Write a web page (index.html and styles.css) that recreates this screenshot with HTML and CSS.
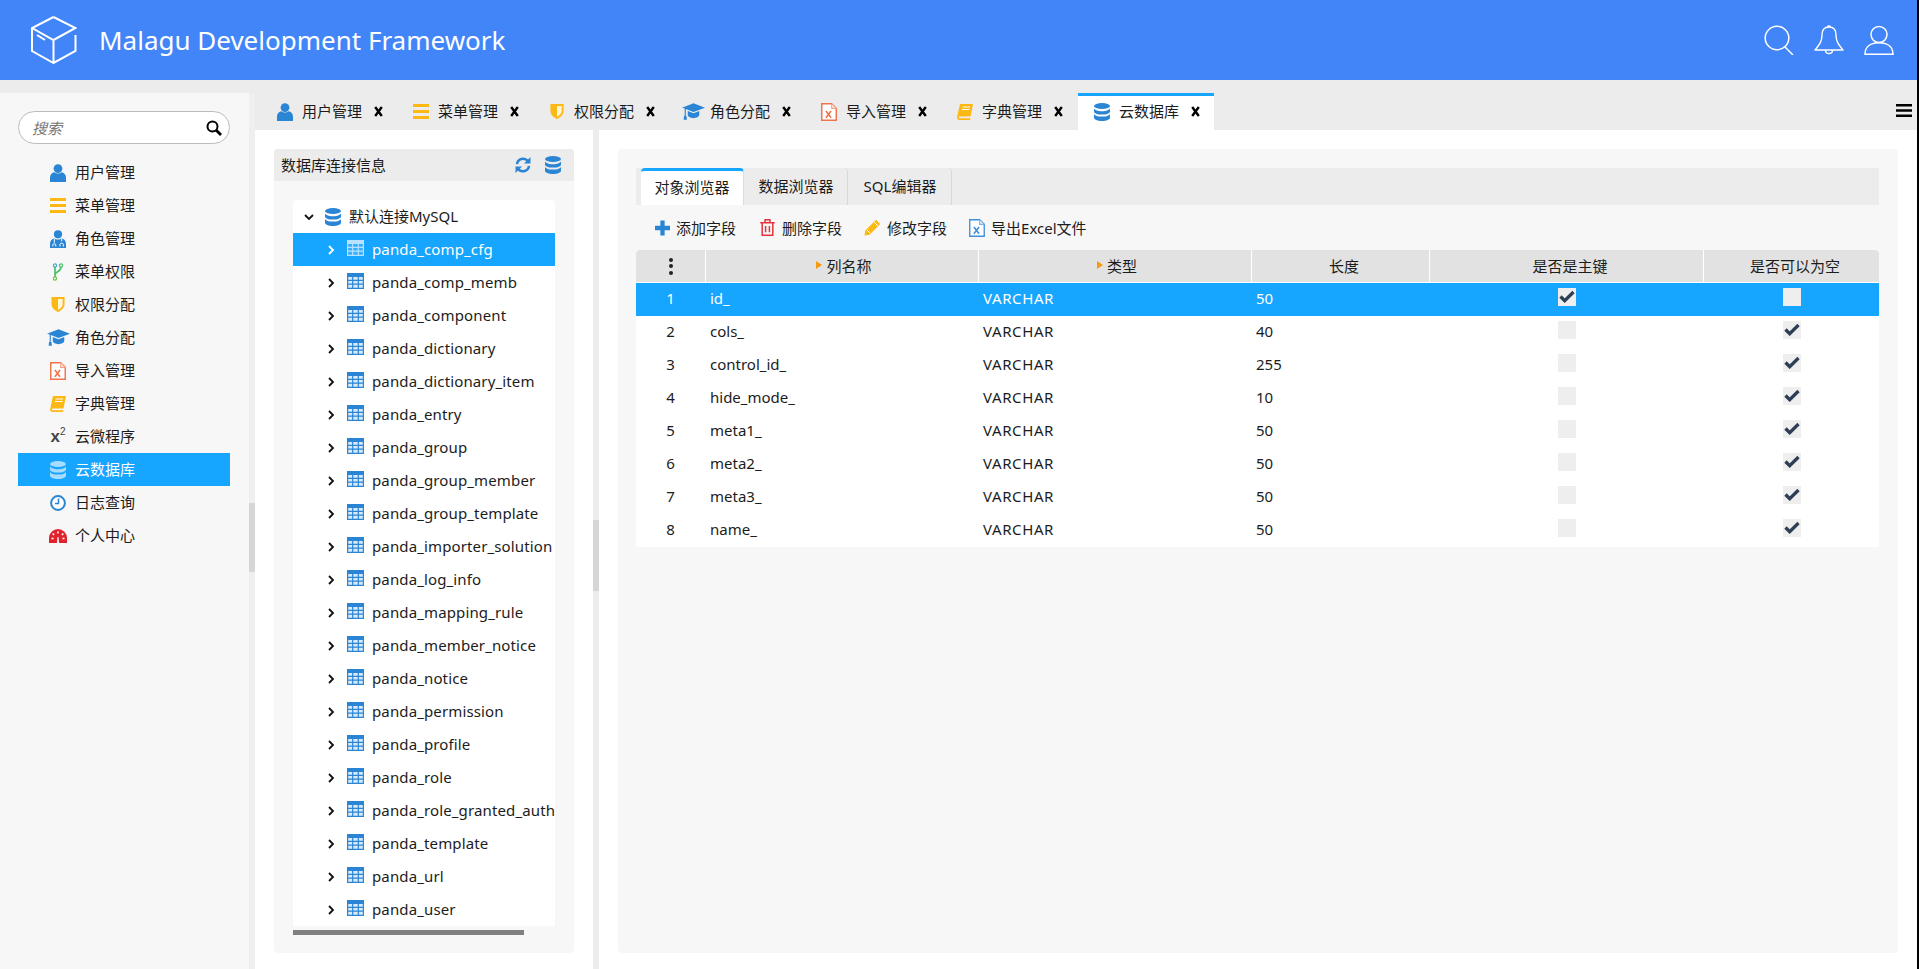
FILE: index.html
```html
<!DOCTYPE html>
<html lang="zh-CN">
<head>
<meta charset="utf-8">
<title>Malagu Development Framework</title>
<link rel="stylesheet" href="styles.css">
</head>
<body>
<svg class="defs" xmlns="http://www.w3.org/2000/svg">
  <symbol id="i-user" viewBox="0 0 16 18"><circle cx="8" cy="4.600" r="4.400" fill="currentColor"/><path d="M0 18v-4.500C0 10.500 2 8.600 4.400 8.200 5.400 9 6.600 9.400 8 9.400s2.600-.4 3.600-1.200C14 8.600 16 10.500 16 13.500V18z" fill="currentColor"/></symbol>
  <symbol id="i-bars" viewBox="0 0 16 15"><path d="M0 0h16v3H0zM0 6h16v3H0zM0 12h16v3H0z" fill="#fdb813"/></symbol>
  <symbol id="i-doctor" viewBox="0 0 16 18"><circle cx="8" cy="4.300" r="4.100" fill="#2a85d5"/><path d="M0 18v-4.200C0 10.500 2 8.800 4.400 8.400c1 .8 2.200 1.100 3.600 1.100s2.600-.3 3.600-1.100C14 8.800 16 10.500 16 13.800V18z" fill="#2a85d5"/><path d="M4.300 9v3.800M11.700 9v2.300M2.800 16.500v-1.600c0-1.500 3-1.500 3 0v1.600M10 16.500v-2.200c0-1.400 3.400-1.400 3.400 0v2.200" fill="none" stroke="#fff" stroke-width="1"/></symbol>
  <symbol id="i-branch" viewBox="0 0 12 18"><path d="M3 4v10M3 12c0-4 6-2.500 6-8" fill="none" stroke="#4cc06a" stroke-width="1.700"/><circle cx="3" cy="2.500" r="1.600" fill="none" stroke="#4aa8c8" stroke-width="1.200"/><circle cx="9" cy="2.500" r="1.600" fill="none" stroke="#4cc06a" stroke-width="1.200"/><circle cx="3" cy="15.500" r="1.600" fill="none" stroke="#6cc04a" stroke-width="1.200"/></symbol>
  <symbol id="i-shield" viewBox="0 0 14 16"><path d="M0 0h14v7.500C14 12 10 14.500 7 16 4 14.500 0 12 0 7.500z" fill="#fdb813"/><path d="M7 2h5v5.500c0 3-2.600 5-5 6.200z" fill="#fff5d8"/></symbol>
  <symbol id="i-cap" viewBox="0 0 24 17"><path d="M12 0 24 4.500 12 9 4 6v7H2.800V5.400L0 4.500z" fill="#2a85d5"/><path d="M6 8v4c0 2 3 3.500 6 3.500s6-1.500 6-3.500V8l-6 2.300z" fill="#2a85d5"/><path d="M2.200 13h2.400l.5 4H1.700z" fill="#2a85d5"/></symbol>
  <symbol id="i-excel" viewBox="0.300 0.300 15.400 17.400"><path d="M1 1h9.500L15 5.500V17H1z" fill="#fff" stroke="#f0734a" stroke-width="1.400"/><path d="M10.500 1v4.500H15" fill="#fde3da" stroke="#f0a58e" stroke-width="1"/><path d="M5 8l5 6.500M10 8l-5 6.500" stroke="#f0734a" stroke-width="1.500"/></symbol>
  <symbol id="i-excel-blue" viewBox="0.300 0.300 15.400 17.400"><path d="M1 1h9.500L15 5.500V17H1z" fill="#fff" stroke="#3f8fdc" stroke-width="1.300"/><path d="M10.500 1v4.500H15" fill="#dcecfa" stroke="#7fb4e6" stroke-width="1"/><path d="M5 8l5 6.500M10 8l-5 6.500" stroke="#3f8fdc" stroke-width="1.500"/></symbol>
  <symbol id="i-book" viewBox="0 0 16 16"><path d="M3 0h13l-2.500 12.500H2.800c-1.200 0-1.500 1.800 0 1.800h10.700L13 16H2.500C.800 16-.2 14.500.1 13z" fill="#fdb813"/><path d="M5.500 3H13M5 5.500h7.500" stroke="#fff" stroke-width="1.100"/></symbol>
  <symbol id="i-db" viewBox="0 0 16 18"><ellipse cx="8" cy="3" rx="8" ry="3" fill="currentColor"/><path d="M0 5c0 1.800 3.600 3.200 8 3.200S16 6.800 16 5v3.400c0 1.800-3.600 3.200-8 3.200S0 10.200 0 8.400z" fill="currentColor"/><path d="M0 10.400c0 1.800 3.600 3.200 8 3.200s8-1.400 8-3.200v4.400c0 1.800-3.600 3.200-8 3.200s-8-1.400-8-3.200z" fill="currentColor"/></symbol>
  <symbol id="i-clock" viewBox="0 0 16 16"><circle cx="8" cy="8" r="6.900" fill="#fff" stroke="#2a85d5" stroke-width="2"/><path d="M8.500 3.500v5H5" fill="none" stroke="#2a85d5" stroke-width="1.500"/></symbol>
  <symbol id="i-gauge" viewBox="0 0 18 14"><path d="M0 14v-5a9 9 0 0 1 18 0v5z" fill="#e0242e"/><path d="M9 2.500v2M3.800 4.500 5 6M14.200 4.500 13 6M2.500 9.500h2M13.500 9.500h2" stroke="#fff" stroke-width="1.600"/><path d="M8 14l.5-6h1l.5 6z" fill="#fff"/></symbol>
  <symbol id="i-table" viewBox="0 0 17 16"><path d="M0 0h17v16H0z" fill="currentColor" opacity=".18"/><path d="M0 0h17v4H0z" fill="currentColor"/><path d="M.6.600h15.800v14.800H.6zM.6 7.400h15.800M.6 11.200h15.800M5.700 4v11M11.300 4v11" fill="none" stroke="currentColor" stroke-width="1.200"/></symbol>
  <symbol id="i-right" viewBox="0 0 8 10"><path d="M2 1l4 4-4 4" fill="none" stroke="currentColor" stroke-width="1.800"/></symbol>
  <symbol id="i-down" viewBox="0 0 10 8"><path d="M1 2l4 4 4-4" fill="none" stroke="currentColor" stroke-width="1.800"/></symbol>
  <symbol id="i-x" viewBox="0 0 9 11"><path d="M1.200 1l6.600 9M7.800 1l-6.600 9" stroke="currentColor" stroke-width="2.400"/></symbol>
  <symbol id="i-check" viewBox="0 0 16 13"><path d="M1.500 6.500l4.200 4.200L14.500 2" fill="none" stroke="#2e3f55" stroke-width="3.300"/></symbol>
  <symbol id="i-refresh" viewBox="0 0 16 16"><path d="M2 7.200A6.200 6.200 0 0 1 12.800 3.800" fill="none" stroke="#2a85d5" stroke-width="2.500"/><path d="M15.500 0v6.500H9z" fill="#2a85d5"/><path d="M14 8.800A6.200 6.200 0 0 1 3.200 12.200" fill="none" stroke="#2a85d5" stroke-width="2.500"/><path d="M.5 16V9.500H7z" fill="#2a85d5"/></symbol>
  <symbol id="i-plus" viewBox="0 0 14 14"><path d="M5 0h4v5h5v4H9v5H5V9H0V5h5z" fill="#2a85d5"/></symbol>
  <symbol id="i-trash" viewBox="0 0 14 16"><path d="M.200 3.500h13.600M4.700 3.200V.8h4.600v2.400M2 4v11.300h10V4M5.200 6.500v6M8.800 6.500v6" fill="none" stroke="#e4333c" stroke-width="1.400"/></symbol>
  <symbol id="i-pencil" viewBox="0 0 17 17"><path d="M12 .800l4.200 4.200L5.500 15.700.500 16.500l.8-5z" fill="#fdb813"/><path d="M10 3l4 4M3 11l3 3" stroke="#fff" stroke-width="1"/></symbol>
  <symbol id="i-find" viewBox="0 0 16 16"><circle cx="6.500" cy="6.500" r="5" fill="none" stroke="#000" stroke-width="2"/><path d="M10 10l5 5" stroke="#000" stroke-width="2.800"/></symbol>
  <symbol id="i-menu" viewBox="0 0 16 13"><path d="M0 0h16v2.600H0zM0 5.200h16v2.600H0zM0 10.400h16V13H0z" fill="#000"/></symbol>
</svg>

<div class="app">
  <header class="topbar">
    <svg class="logo" viewBox="0 0 46 48" xmlns="http://www.w3.org/2000/svg"><path d="M22.500 1 1 12v23l21.500 12 22-12V19M1 12l21.500 12L44.500 12 22.500 1M22.500 24v23M6 19l8 5" fill="none" stroke="#fff" stroke-width="2"/></svg>
    <h1 class="brand">Malagu Development Framework</h1>
    <div class="top-icons">
      <svg class="top-icon" viewBox="0 0 30 30" xmlns="http://www.w3.org/2000/svg"><circle cx="13" cy="13" r="11.800" fill="none" stroke="#fff" stroke-width="1.500"/><path d="M21 22l8 8" stroke="#fff" stroke-width="1.500"/></svg>
      <svg class="top-icon" viewBox="0 0 30 30" xmlns="http://www.w3.org/2000/svg"><path d="M15 2c-5 0-7 3-7 8 0 7-3 10-7 15h28c-4-5-7-8-7-15 0-5-2-8-7-8zM13.500 2c0-1.500 3-1.500 3 0M11.500 25.500c0 4 7 4 7 0" fill="none" stroke="#fff" stroke-width="1.400" stroke-linejoin="round"/></svg>
      <svg class="top-icon" viewBox="0 0 30 30" xmlns="http://www.w3.org/2000/svg"><circle cx="15" cy="9.500" r="8" fill="none" stroke="#fff" stroke-width="1.500"/><path d="M1 29.300c0-8 6-11.500 14-11.500s14 3.500 14 11.500z" fill="none" stroke="#fff" stroke-width="1.500"/></svg>
    </div>
  </header>

  <div class="main">
    <aside class="sidebar">
      <div class="search"><span class="search-hint">搜索</span><svg class="search-ic"><use href="#i-find"/></svg></div>
      <nav class="menu">
        <div class="menu-row"><span class="ic-cell"><svg class="ic ic-blue"><use href="#i-user"/></svg></span>用户管理</div>
        <div class="menu-row"><span class="ic-cell"><svg class="ic ic-low"><use href="#i-bars"/></svg></span>菜单管理</div>
        <div class="menu-row"><span class="ic-cell"><svg class="ic"><use href="#i-doctor"/></svg></span>角色管理</div>
        <div class="menu-row"><span class="ic-cell"><svg class="ic"><use href="#i-branch"/></svg></span>菜单权限</div>
        <div class="menu-row"><span class="ic-cell"><svg class="ic ic-low"><use href="#i-shield"/></svg></span>权限分配</div>
        <div class="menu-row"><span class="ic-cell"><svg class="ic-wide"><use href="#i-cap"/></svg></span>角色分配</div>
        <div class="menu-row"><span class="ic-cell"><svg class="ic"><use href="#i-excel"/></svg></span>导入管理</div>
        <div class="menu-row"><span class="ic-cell"><svg class="ic"><use href="#i-book"/></svg></span>字典管理</div>
        <div class="menu-row"><span class="ic-cell"><span class="x2">x<sup>2</sup></span></span>云微程序</div>
        <div class="menu-row is-on"><span class="ic-cell"><svg class="ic ic-pale"><use href="#i-db"/></svg></span>云数据库</div>
        <div class="menu-row"><span class="ic-cell"><svg class="ic"><use href="#i-clock"/></svg></span>日志查询</div>
        <div class="menu-row"><span class="ic-cell"><svg class="ic-gauge"><use href="#i-gauge"/></svg></span>个人中心</div>
      </nav>
    </aside>
    <div class="side-track"><div class="side-thumb"></div></div>

    <div class="work">
      <div class="tabs">
        <div class="tab"><span class="tab-ic"><svg class="ic ic-blue"><use href="#i-user"/></svg></span><span class="tab-label">用户管理</span><svg class="tab-x"><use href="#i-x"/></svg></div>
        <div class="tab"><span class="tab-ic"><svg class="ic ic-low"><use href="#i-bars"/></svg></span><span class="tab-label">菜单管理</span><svg class="tab-x"><use href="#i-x"/></svg></div>
        <div class="tab"><span class="tab-ic"><svg class="ic ic-low"><use href="#i-shield"/></svg></span><span class="tab-label">权限分配</span><svg class="tab-x"><use href="#i-x"/></svg></div>
        <div class="tab"><span class="tab-ic"><svg class="ic-wide"><use href="#i-cap"/></svg></span><span class="tab-label">角色分配</span><svg class="tab-x"><use href="#i-x"/></svg></div>
        <div class="tab"><span class="tab-ic"><svg class="ic"><use href="#i-excel"/></svg></span><span class="tab-label">导入管理</span><svg class="tab-x"><use href="#i-x"/></svg></div>
        <div class="tab"><span class="tab-ic"><svg class="ic"><use href="#i-book"/></svg></span><span class="tab-label">字典管理</span><svg class="tab-x"><use href="#i-x"/></svg></div>
        <div class="tab is-active"><span class="tab-ic"><svg class="ic ic-blue"><use href="#i-db"/></svg></span><span class="tab-label">云数据库</span><svg class="tab-x"><use href="#i-x"/></svg></div>
        <svg class="tabs-menu"><use href="#i-menu"/></svg>
      </div>

      <div class="panes">
        <section class="left-pane">
          <div class="conn">
            <div class="conn-head">
              <span>数据库连接信息</span>
              <svg class="conn-ic"><use href="#i-refresh"/></svg>
              <svg class="conn-ic ic-blue"><use href="#i-db"/></svg>
            </div>
            <div class="tree">
              <div class="tree-root"><svg class="chev-down"><use href="#i-down"/></svg><svg class="ic ic-blue"><use href="#i-db"/></svg><span class="root-label">默认连接MySQL</span></div>
              <div class="tree-row is-on"><svg class="chev"><use href="#i-right"/></svg><svg class="tbl"><use href="#i-table"/></svg><span>panda_comp_cfg</span></div>
              <div class="tree-row"><svg class="chev"><use href="#i-right"/></svg><svg class="tbl"><use href="#i-table"/></svg><span>panda_comp_memb</span></div>
              <div class="tree-row"><svg class="chev"><use href="#i-right"/></svg><svg class="tbl"><use href="#i-table"/></svg><span>panda_component</span></div>
              <div class="tree-row"><svg class="chev"><use href="#i-right"/></svg><svg class="tbl"><use href="#i-table"/></svg><span>panda_dictionary</span></div>
              <div class="tree-row"><svg class="chev"><use href="#i-right"/></svg><svg class="tbl"><use href="#i-table"/></svg><span>panda_dictionary_item</span></div>
              <div class="tree-row"><svg class="chev"><use href="#i-right"/></svg><svg class="tbl"><use href="#i-table"/></svg><span>panda_entry</span></div>
              <div class="tree-row"><svg class="chev"><use href="#i-right"/></svg><svg class="tbl"><use href="#i-table"/></svg><span>panda_group</span></div>
              <div class="tree-row"><svg class="chev"><use href="#i-right"/></svg><svg class="tbl"><use href="#i-table"/></svg><span>panda_group_member</span></div>
              <div class="tree-row"><svg class="chev"><use href="#i-right"/></svg><svg class="tbl"><use href="#i-table"/></svg><span>panda_group_template</span></div>
              <div class="tree-row"><svg class="chev"><use href="#i-right"/></svg><svg class="tbl"><use href="#i-table"/></svg><span>panda_importer_solution</span></div>
              <div class="tree-row"><svg class="chev"><use href="#i-right"/></svg><svg class="tbl"><use href="#i-table"/></svg><span>panda_log_info</span></div>
              <div class="tree-row"><svg class="chev"><use href="#i-right"/></svg><svg class="tbl"><use href="#i-table"/></svg><span>panda_mapping_rule</span></div>
              <div class="tree-row"><svg class="chev"><use href="#i-right"/></svg><svg class="tbl"><use href="#i-table"/></svg><span>panda_member_notice</span></div>
              <div class="tree-row"><svg class="chev"><use href="#i-right"/></svg><svg class="tbl"><use href="#i-table"/></svg><span>panda_notice</span></div>
              <div class="tree-row"><svg class="chev"><use href="#i-right"/></svg><svg class="tbl"><use href="#i-table"/></svg><span>panda_permission</span></div>
              <div class="tree-row"><svg class="chev"><use href="#i-right"/></svg><svg class="tbl"><use href="#i-table"/></svg><span>panda_profile</span></div>
              <div class="tree-row"><svg class="chev"><use href="#i-right"/></svg><svg class="tbl"><use href="#i-table"/></svg><span>panda_role</span></div>
              <div class="tree-row"><svg class="chev"><use href="#i-right"/></svg><svg class="tbl"><use href="#i-table"/></svg><span>panda_role_granted_authority</span></div>
              <div class="tree-row"><svg class="chev"><use href="#i-right"/></svg><svg class="tbl"><use href="#i-table"/></svg><span>panda_template</span></div>
              <div class="tree-row"><svg class="chev"><use href="#i-right"/></svg><svg class="tbl"><use href="#i-table"/></svg><span>panda_url</span></div>
              <div class="tree-row"><svg class="chev"><use href="#i-right"/></svg><svg class="tbl"><use href="#i-table"/></svg><span>panda_user</span></div>
            </div>
            <div class="tree-scroll"></div>
          </div>
        </section>

        <div class="splitter"><div class="split-thumb"></div></div>

        <section class="right-pane">
          <div class="browser">
            <div class="sub-tabs">
              <div class="sub-tab is-active">对象浏览器</div>
              <div class="sub-tab">数据浏览器</div>
              <div class="sub-tab">SQL编辑器</div>
            </div>
            <div class="toolbar">
              <div class="tool tool-add"><svg class="tool-ic"><use href="#i-plus"/></svg>添加字段</div>
              <div class="tool tool-del"><svg class="tool-ic"><use href="#i-trash"/></svg>删除字段</div>
              <div class="tool tool-edit"><svg class="tool-ic"><use href="#i-pencil"/></svg>修改字段</div>
              <div class="tool tool-xls"><svg class="tool-ic"><use href="#i-excel-blue"/></svg>导出Excel文件</div>
            </div>
            <div class="grid">
              <div class="g-head">
                <div class="gh gh-dots"><span class="dots"><i></i><i></i><i></i></span></div>
                <div class="gh gh-sort"><span class="sort"></span>列名称</div>
                <div class="gh gh-sort"><span class="sort"></span>类型</div>
                <div class="gh gh-pad">长度</div>
                <div class="gh gh-pad">是否是主键</div>
                <div class="gh gh-pad">是否可以为空</div>
              </div>
              <div class="g-row is-on"><div class="gc gc-n">1</div><div class="gc">id_</div><div class="gc gc-type">VARCHAR</div><div class="gc">50</div><div class="gc gc-c"><span class="cb"><svg class="cb-ic"><use href="#i-check"/></svg></span></div><div class="gc gc-c"><span class="cb"></span></div></div>
              <div class="g-row"><div class="gc gc-n">2</div><div class="gc">cols_</div><div class="gc gc-type">VARCHAR</div><div class="gc">40</div><div class="gc gc-c"><span class="cb"></span></div><div class="gc gc-c"><span class="cb"><svg class="cb-ic"><use href="#i-check"/></svg></span></div></div>
              <div class="g-row"><div class="gc gc-n">3</div><div class="gc">control_id_</div><div class="gc gc-type">VARCHAR</div><div class="gc">255</div><div class="gc gc-c"><span class="cb"></span></div><div class="gc gc-c"><span class="cb"><svg class="cb-ic"><use href="#i-check"/></svg></span></div></div>
              <div class="g-row"><div class="gc gc-n">4</div><div class="gc">hide_mode_</div><div class="gc gc-type">VARCHAR</div><div class="gc">10</div><div class="gc gc-c"><span class="cb"></span></div><div class="gc gc-c"><span class="cb"><svg class="cb-ic"><use href="#i-check"/></svg></span></div></div>
              <div class="g-row"><div class="gc gc-n">5</div><div class="gc">meta1_</div><div class="gc gc-type">VARCHAR</div><div class="gc">50</div><div class="gc gc-c"><span class="cb"></span></div><div class="gc gc-c"><span class="cb"><svg class="cb-ic"><use href="#i-check"/></svg></span></div></div>
              <div class="g-row"><div class="gc gc-n">6</div><div class="gc">meta2_</div><div class="gc gc-type">VARCHAR</div><div class="gc">50</div><div class="gc gc-c"><span class="cb"></span></div><div class="gc gc-c"><span class="cb"><svg class="cb-ic"><use href="#i-check"/></svg></span></div></div>
              <div class="g-row"><div class="gc gc-n">7</div><div class="gc">meta3_</div><div class="gc gc-type">VARCHAR</div><div class="gc">50</div><div class="gc gc-c"><span class="cb"></span></div><div class="gc gc-c"><span class="cb"><svg class="cb-ic"><use href="#i-check"/></svg></span></div></div>
              <div class="g-row"><div class="gc gc-n">8</div><div class="gc">name_</div><div class="gc gc-type">VARCHAR</div><div class="gc">50</div><div class="gc gc-c"><span class="cb"></span></div><div class="gc gc-c"><span class="cb"><svg class="cb-ic"><use href="#i-check"/></svg></span></div></div>
            </div>
          </div>
        </section>
      </div>
    </div>
  </div>
</div>
</body>
</html>
```

FILE: styles.css
```css
* { box-sizing: border-box; }
html, body { margin: 0; height: 100%; overflow: hidden; }
body {
  background: #000;
  font-family: "Noto Sans", "Noto Sans CJK SC", sans-serif;
  font-size: 15px;
  color: #1c1c1c;
}
.defs { display: none; }
.app { width: 1917px; height: 969px; display: flex; flex-direction: column; background: #ececec; }
svg { flex: none; }

/* top bar */
.topbar { height: 80px; flex: none; display: flex; align-items: center; background: #4285f9; padding-left: 31px; padding-right: 23px; }
.logo { width: 46px; height: 48px; flex: none; }
.brand { margin: 0 0 0 22px; font-size: 26px; font-weight: 400; color: #fff; line-height: 80px; }
.top-icons { margin-left: auto; display: flex; gap: 20px; }
.top-icon { width: 30px; height: 30px; display: block; }

.main { flex: 1; display: flex; min-height: 0; }

/* sidebar */
.sidebar { width: 249px; flex: none; margin-top: 13px; background: #f7f7f7; padding: 18px 19px 0 18px; }
.search { height: 33px; display: flex; align-items: center; justify-content: space-between; background: #fff; border: 1px solid #bbb; border-radius: 17px; padding: 0 7px 0 13px; }
.search-hint { font-style: italic; font-size: 15px; color: #777; }
.search-ic { width: 16px; height: 16px; }
.menu { margin-top: 12px; }
.menu-row { height: 33px; display: flex; align-items: center; padding: 0 0 2px 28px; }
.menu-row.is-on { background: #16a5ff; color: #fff; }
.ic-cell { width: 24px; height: 20px; margin: 2px 5px 0 0; display: flex; align-items: center; justify-content: center; }
.ic { width: 16px; height: 18px; display: block; flex: none; }
.ic-wide { width: 23px; height: 17px; display: block; flex: none; }
.ic-gauge { width: 18px; height: 14px; display: block; flex: none; }
.ic-low { height: 15px; }
.ic-blue { color: #2a85d5; }
.ic-pale { color: #a6dcff; }
.x2 { font-family: "Liberation Sans", sans-serif; font-size: 17px; font-weight: 700; color: #444; line-height: 18px; }
.x2 sup { font-size: 10px; font-weight: 400; line-height: 0; }

.side-track { width: 6px; flex: none; margin-top: 13px; position: relative; background: #efefef; }
.side-thumb { position: absolute; left: 0; right: 0; top: 410px; height: 69px; background: #d6d6d6; }

/* work area */
.work { flex: 1; min-width: 0; display: flex; flex-direction: column; }
.tabs { height: 50px; flex: none; display: flex; align-items: flex-end; padding-left: 7px; position: relative; }
.tab { width: 136px; height: 37px; display: flex; align-items: center; padding-left: 11px; }
.tab.is-active { background: #fff; border-top: 3px solid #16a5ff; padding-left: 12px; padding-bottom: 3px; }
.tab-ic { width: 24px; height: 20px; margin-right: 5px; display: flex; align-items: center; justify-content: center; }
.tab-label { width: 60px; margin-right: 12px; white-space: nowrap; margin-top: -2px; }
.tab-x { width: 9px; height: 11px; color: #000; }
.tabs-menu { position: absolute; right: 5px; top: 24px; width: 16px; height: 13px; }

.panes { flex: 1; min-height: 0; display: flex; background: #fff; }
.left-pane { width: 338px; flex: none; padding: 19px 19px 16px; }
.conn { height: 100%; background: #f7f7f7; border-radius: 4px; }
.conn-head { height: 32px; display: flex; align-items: center; padding: 0 13px 0 7px; background: #ececec; border-radius: 4px 4px 0 0; }
.conn-head span { margin: -2px auto 0 0; }
.conn-ic { width: 16px; height: 18px; margin-left: 14px; }
.tree { margin: 19px 19px 0; height: 726px; background: #fff; overflow: hidden; border-radius: 4px 4px 0 0; }
.tree-root, .tree-row { height: 33px; display: flex; align-items: center; white-space: nowrap; }
.tree-root { padding-left: 11px; }
.chev-down { width: 10px; height: 8px; color: #111; margin-right: 11px; }
.root-label { margin: -2px 0 0 8px; }
.tree-row { padding-left: 34px; }
.tree-row span { margin-top: -2px; letter-spacing: .13px; }
.tree-row.is-on { background: #16a5ff; color: #fff; }
.chev { width: 8px; height: 10px; color: #111; margin-right: 12px; }
.is-on .chev { color: #fff; }
.tbl { width: 17px; height: 16px; color: #2a85d5; margin-right: 8px; margin-top: -4px; }
.is-on .tbl { color: #b8e2ff; }
.tree-scroll { width: 231px; height: 5px; margin: 4px 0 0 19px; background: #808080; }

.splitter { width: 6px; flex: none; position: relative; background: #ececec; }
.split-thumb { position: absolute; left: 0; right: 0; top: 390px; height: 71px; background: #d6d6d6; }

.right-pane { flex: 1; min-width: 0; padding: 19px 19px 16px; }
.browser { height: 100%; background: #f7f7f7; border-radius: 4px; padding: 19px 19px 0 18px; }
.sub-tabs { height: 37px; display: flex; padding-left: 5px; background: #ececec; }
.sub-tab { width: 104px; display: flex; align-items: center; justify-content: center; border-right: 1px solid #d8d8d8; border-radius: 4px 4px 0 0; white-space: nowrap; padding: 0 0 2px 1px; }
.sub-tab.is-active { width: 103px; background: #fff; border-top: 3px solid #16a5ff; border-right: 1px solid #ddd; padding: 0 0 4px; }
.toolbar { height: 45px; display: flex; align-items: center; }
.tool { display: flex; align-items: center; white-space: nowrap; }
.tool-ic { width: 15px; height: 16px; margin-right: 8px; }
.tool-add { margin-left: 19px; margin-right: 24px; }
.tool-add .tool-ic { margin-right: 6px; }
.tool-del { margin-right: 22px; }
.tool-del .tool-ic { height: 17px; margin-right: 7px; }
.tool-edit { margin-right: 22px; }
.tool-edit .tool-ic { width: 17px; height: 17px; margin-right: 6px; }
.tool-xls .tool-ic { width: 16px; height: 18px; margin-right: 6px; }
.grid { background: #fff; }
.g-head, .g-row { display: grid; grid-template-columns: 69px 273px 273px 178px 274px 176px; }
.g-head { height: 33px; background: #e2e2e2; border-bottom: 1px solid #fff; border-radius: 4px 4px 0 0; }
.gh { display: flex; align-items: center; justify-content: center; border-left: 1px solid #fff; padding-bottom: 2px; }
.gh-dots { border-left: 0; padding-bottom: 0; }
.gh-sort { padding-left: 4px; }
.gh-pad { padding-left: 7px; }
.dots { display: flex; flex-direction: column; gap: 2.500px; }
.dots i { width: 4px; height: 4px; border-radius: 50%; background: #222; }
.sort { width: 0; height: 0; margin-right: 4px; border-left: 6px solid #f59a0c; border-top: 4px solid transparent; border-bottom: 4px solid transparent; }
.g-row { height: 33px; }
.g-row.is-on { background: #16a5ff; color: #fff; }
.gc { display: flex; align-items: center; padding: 0 0 4px 5px; }
.gc-type { letter-spacing: .6px; }
.gc-n { justify-content: center; padding: 0 0 3px; }
.gc-c { justify-content: center; align-items: flex-start; padding: 5px 0 0 2px; }
.cb { width: 18px; height: 18px; background: #eee; display: flex; align-items: center; justify-content: center; }
.cb-ic { width: 16px; height: 13px; margin-top: -2px; }
```
